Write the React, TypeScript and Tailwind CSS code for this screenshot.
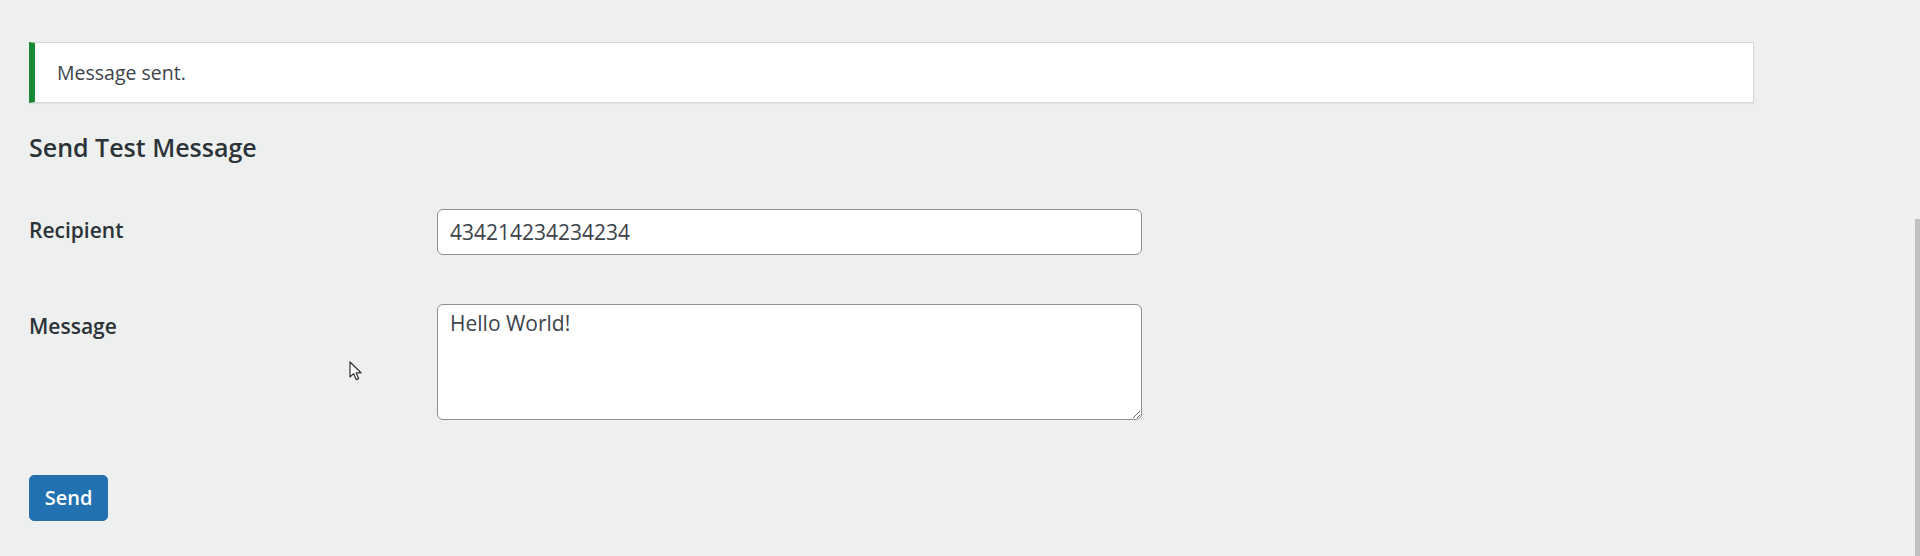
import React from "react";

export default function App() {
  const font = { fontFamily: '"Open Sans", "Noto Sans", Arial, sans-serif' };
  return (
    <div
      className="relative min-h-[556px] w-full overflow-hidden bg-[#eef0ef] pl-[29px] pt-[42px]"
      style={font}
    >
      <div className="flex h-[61px] w-[1725px] items-center border border-[#d6d7d8] border-l-[6px] border-l-[#1a8a36] bg-white pl-[22px] shadow-[0_1px_1px_rgba(0,0,0,0.06)]">
        <p className="text-[19.5px] leading-[30px] text-[#3c434a]">Message sent.</p>
      </div>

      <h2 className="mt-[27px] text-[25px] font-semibold leading-[34px] text-[#2c3338]">
        Send Test Message
      </h2>

      <div className="mt-[45px] grid grid-cols-[408px_705px] gap-y-[49px]">
        <label className="pt-[6px] text-[21px] font-semibold leading-[30px] text-[#2c3338]">
          Recipient
        </label>
        <input
          type="text"
          readOnly
          defaultValue="434214234234234"
          className="h-[46px] w-[705px] rounded-[6px] border border-[#8c8f94] bg-white px-[12px] text-[21px] leading-[30px] text-[#3c434a] outline-none"
          style={font}
        />

        <label className="pt-[7px] text-[21px] font-semibold leading-[30px] text-[#2c3338]">
          Message
        </label>
        <textarea
          readOnly
          defaultValue="Hello World!"
          className="h-[116px] w-[705px] resize rounded-[6px] border border-[#8c8f94] bg-white px-[12px] pt-[3px] text-[21px] leading-[30px] text-[#3c434a] outline-none"
          style={font}
        />
      </div>

      <button
        type="button"
        className="mt-[55px] flex h-[46px] w-[79px] items-center justify-center rounded-[5px] border border-[#2271b1] bg-[#2271b1] text-[20px] font-semibold text-white"
        style={font}
      >
        Send
      </button>

      {/* mouse cursor */}
      <svg
        className="absolute left-[349px] top-[361px]"
        width="14"
        height="21"
        viewBox="0 0 14 21"
      >
        <path
          d="M1 1 L1 16 L4.6 12.6 L7.2 18.6 L9.6 17.6 L7.1 11.8 L12 11.8 Z"
          fill="#ffffff"
          stroke="#333"
          strokeWidth="1.2"
          strokeLinejoin="round"
        />
      </svg>

      {/* scrollbar thumb */}
      <div className="absolute bottom-0 right-0 top-[219px] w-[5px] bg-[#c1c1c1]" />
    </div>
  );
}
